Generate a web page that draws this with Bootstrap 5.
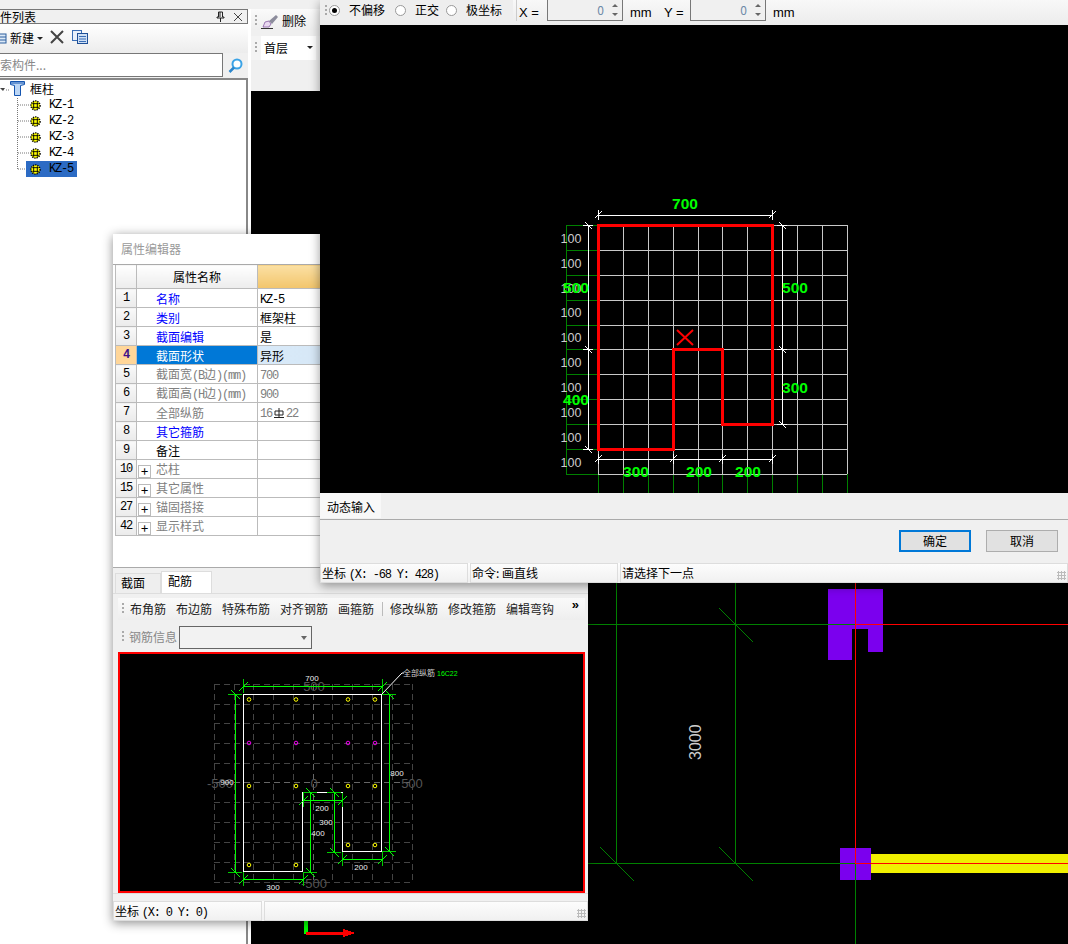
<!DOCTYPE html>
<html lang="zh">
<head>
  <meta charset="UTF-8">
  <title>属性编辑器</title>
  <link rel="stylesheet" href="https://cdn.jsdelivr.net/npm/bootstrap@5.3.3/dist/css/bootstrap.min.css">
  <style>
    html, body { margin: 0; background: #000; }
    body { font: 12px/1.2 "Noto Sans CJK SC", "Liberation Sans", sans-serif; color: #000; }
    svg { display: block; }
    .desk { position: relative; width: 1068px; height: 944px; overflow: hidden; background: #000; }
    .rear { position: absolute; left: 0; top: 0; }
    .win { position: absolute; background: #f0f0f0; }
    .lat { font-family: "Liberation Mono", monospace; letter-spacing: -1.2px; }

    /* left tree pane */
    .pane { left: 0; top: 0; width: 251px; height: 944px; background: #fff; }
    .pane-top { height: 9px; background: #f0f0f0; }
    .pane-title { height: 15px; width: 248px; background: #f0f0f0; border: solid #777; border-width: 1px 1px 1px 0; padding-left: 1px; overflow: hidden; font-size: 12px; line-height: 13px; }
    .pane-tools { height: 29px; width: 248px; background: linear-gradient(#fff, #ececec); }
    .pane-search { height: 25px; width: 248px; background: #f0f0f0; }
    .pane-input { width: 223px; height: 24px; background: #fff; border: 1px solid #777; border-left: 0; color: #888; line-height: 22px; overflow: hidden; }
    .pane-tree { width: 248px; height: 867px; border: solid #888; border-width: 2px 2px 0 0; position: relative; }
    .tree-row { height: 16px; line-height: 16px; }
    .tree-sel { background: #2c6bc4; color: #000; }
    .tool-up { margin-top: -4px; }

    /* strip */
    .strip { left: 251px; top: 0; width: 69px; height: 91px; }
    .strip-bar { height: 21px; margin-top: 9px; padding-top: 3px; background: linear-gradient(#fafafa, #eee); }
    .grip { width: 2px; height: 12px; flex: none; background: repeating-linear-gradient(#aaa 0 2px, transparent 2px 4px); }
    .level { height: 24px; margin-top: 6px; background: #f4f4f4; }
    .level-box { width: 55px; height: 24px; background: #fff; line-height: 24px; padding-left: 3px; }

    /* property window */
    .prop { left: 113px; top: 234px; width: 475px; height: 687px; box-shadow: 0 2px 10px rgba(0,0,0,.45); }
    .prop-title { height: 30px; background: #fff; color: #9a9a9a; line-height: 30px; padding-left: 8px; }
    .prop-body { height: 304px; background: #fff; border: solid #aaa; border-width: 1px 0; padding-left: 2px; overflow: hidden; }
    .prop-grid { table-layout: fixed; width: 460px; border-collapse: collapse; margin: -1px 0 0; }
    .prop-grid th, .prop-grid td { height: 19px; padding: 2px 2px 0; border: 1px solid #bbb; font-weight: 400; line-height: 14px; vertical-align: middle; white-space: nowrap; overflow: hidden; background: #fff; color: #000; box-shadow: none; }
    .prop-grid thead th { height: 24px; padding-top: 0; text-align: center; background: linear-gradient(#fff, #ececec); }
    .prop-grid thead th.hot { background: linear-gradient(#fbe0a4, #f2c56b); }
    .prop-grid th.num { text-align: center; background: linear-gradient(#f9f9f9, #eaeaea); padding: 0; font-family: "Liberation Mono", monospace; letter-spacing: -1.2px; }
    .prop-grid .blue { color: #00f; }
    .prop-grid .mute { color: #808080; }
    .prop-grid td.name { padding-left: 19px; }
    .prop-grid tr.cur th.num { background: #ffd699; color: #40108a; font-weight: 700; }
    .prop-grid tr.cur td.name { background: #0078d7; color: #fff; }
    .prop-grid tr.cur td.val { background: linear-gradient(90deg, #d8e9f8, #d2e4f3); }
    .plus { display: inline-block; width: 13px; height: 13px; border: 1px solid #bbb; margin: 0 5px 0 -18px; text-align: center; line-height: 10px; font-size: 13px; color: #000; vertical-align: -2px; }
    .tab-row { height: 25px; padding: 3px 0 0 2px; }
    .tab-off { width: 46px; height: 21px; margin-top: 2px; background: #eee; border: 1px solid #ddd; border-bottom: 0; line-height: 18px; padding-left: 5px; }
    .tab-on { width: 51px; height: 23px; background: #fff; border: 1px solid #ddd; border-bottom: 0; line-height: 18px; padding-left: 6px; }
    .rebar-body { flex: 1; border: 1px solid #ddd; border-width: 1px 0; padding: 4px 3px 0 5px; min-height: 0; }
    .bar-one { height: 22px; background: linear-gradient(#fafafa, #eee); padding-left: 4px; }
    .bar-item { color: #222; }
    .bar-sep { width: 1px; height: 14px; background: #bbb; }
    .bar-two { height: 29px; margin-top: 3px; }
    .info { color: #888; }
    .combo { width: 133px; height: 23px; margin-left: 2px; border: 1px solid #666; background: #f2f2f2; position: relative; }
    .combo::after { content: ""; position: absolute; right: 4px; top: 9px; border: 3px solid transparent; border-top: 4px solid #666; }
    .shot { width: 467px; height: 243px; border: 2px solid #f00; background: #000; overflow: hidden; }
    .stat { height: 20px; flex: none; background: linear-gradient(#fdfdfd, #f0f0f0); gap: 2px; }
    .stat-cell { border: 1px solid #ddd; line-height: 18px; padding-left: 1px; overflow: hidden; white-space: nowrap; }
    .prop-stat { margin-top: 7px; }

    /* draw dialog */
    .dlg { left: 320px; top: 0; width: 748px; height: 583px; box-shadow: 0 3px 10px rgba(0,0,0,.4); }
    .dlg-tools { height: 25px; flex: none; background: linear-gradient(#f8f8f8, #ececec); }
    .radios { height: 21px; width: 193px; background: #eee; padding-left: 5px; }
    .dot { width: 11px; height: 11px; flex: none; border-radius: 50%; border: 1px solid #999; background: #fff; position: relative; }
    .dot.on::after { content: ""; position: absolute; left: 2px; top: 2px; width: 5px; height: 5px; border-radius: 50%; background: #000; }
    .dlg-sep { width: 1px; height: 21px; margin-left: 3px; background: #ccc; }
    .sans { font-family: "Liberation Sans", sans-serif; font-size: 13px; }
    .spin { width: 76px; height: 22px; margin-top: -1px; align-self: flex-start; border: 1px solid #777; border-top: 0; background: #f0f0f0; color: #6d8aa8; text-align: right; padding-right: 18px; line-height: 21px; position: relative; }
    .spin::before, .spin::after { content: ""; position: absolute; right: 4px; border: 3px solid transparent; }
    .spin::before { top: 2px; border-bottom: 3px solid #666; }
    .spin::after { bottom: 1px; border-top: 3px solid #666; }
    .dlg-tab { height: 27px; flex: none; border-bottom: 1px solid #aaa; }
    .dlg-tab span { display: block; height: 25px; padding-left: 7px; line-height: 28px; background: #f8f8f8; width: 61px; }
    .dlg-btns { height: 43px; flex: none; padding: 10px 10px 0 0; gap: 15px; }
    .dlg-btn { width: 72px; height: 22px; padding: 0; font-size: 12px; line-height: 18px; border-radius: 0; color: #000; background: #e1e1e1; border: 1px solid #adadad; }
    .dlg-btn.hit { border: 2px solid #0078d7; }
    .rgrip { flex: 1; position: relative; }
    .rgrip::after { content: ""; position: absolute; right: 1px; bottom: 2px; width: 9px; height: 9px; background: radial-gradient(#bbb 1px, transparent 1.2px) 0 0 / 3px 3px; }
  </style>
</head>
<body>
<svg width="0" height="0" style="position:absolute">
  <defs>
    <symbol id="gear" viewBox="0 0 12 12">
      <circle cx="6" cy="6" r="5" fill="#ff0" stroke="#000" stroke-width="1.500" stroke-dasharray="1.500 1"/>
      <path d="M4 2.500v7M8 2.500v7M2.500 4h7M2.500 8h7" stroke="#000" stroke-width="1"/>
    </symbol>
  </defs>
</svg>

<div class="desk">
  <svg class="rear" width="1068" height="944" viewBox="0 0 1068 944" shape-rendering="crispEdges">
    <g fill="#7b00ee">
      <path d="M828 589h55v63h-15v-23h-16v31h-24z"/>
      <rect x="840" y="848" width="31" height="32"/>
    </g>
    <rect x="871" y="854" width="197" height="19" fill="#f0f000"/>
    <g stroke="#008000" fill="none">
      <path d="M616.500 583v280M735.500 583v280M588 624.500h267M588 863.500h267M855.500 863v81"/>
    </g>
    <g stroke="#008000" fill="none" shape-rendering="auto">
      <path d="M719 608l34 34M600 847l34 34M719 847l34 34"/>
    </g>
    <path d="M855.500 583v280M855 624.500h213M855 863.500h213" stroke="#f00" fill="none"/>
    <text x="0" y="0" transform="translate(701 760) rotate(-90)" fill="#ccc" font-family="Liberation Sans, sans-serif" font-size="16">3000</text>
    <rect x="304" y="921" width="4" height="13" fill="#0f0"/>
    <path d="M306 932h37v-3l12 4-12 4v-2h-37z" fill="#f00"/>
  </svg>

  <!-- 构件列表 -->
  <aside class="win pane">
    <div class="pane-top"></div>
    <div class="pane-title d-flex align-items-center">
      <span style="margin-left:-13px">构件列表</span>
      <svg class="ms-auto" width="9" height="11" viewBox="0 0 9 11"><path d="M2.500 1h4v5h1.500v1H1V6h1.500zM4.500 7v4M4 1v5" stroke="#222" fill="none"/></svg>
      <svg class="ms-2 me-1" width="10" height="10" viewBox="0 0 10 10"><path d="M1 1l8 8M9 1l-8 8" stroke="#444"/></svg>
    </div>
    <div class="pane-tools d-flex align-items-center">
      <svg width="7" height="11" viewBox="0 0 7 11"><rect x="-4" y="1" width="10" height="9" fill="#dce9f7" stroke="#2d5f9e"/><path d="M-4 4h10M-4 7h10" stroke="#2d5f9e"/></svg>
      <span style="margin-left:3px">新建</span>
      <svg style="margin-left:3px" width="6" height="4" viewBox="0 0 6 4"><path d="M0 0h6L3 3z" fill="#222"/></svg>
      <svg class="tool-up" style="margin-left:7px" width="14" height="14" viewBox="0 0 14 14"><path d="M1 1l12 12M13 1L1 13" stroke="#444" stroke-width="2"/></svg>
      <svg class="tool-up" style="margin-left:8px" width="16" height="14" viewBox="0 0 16 14"><rect x=".5" y=".5" width="9" height="10" fill="#e8f0fb" stroke="#3a6db5"/><rect x="5.500" y="3.500" width="10" height="10" fill="#cfe0f5" stroke="#1f4f96"/><path d="M7 6.500h7M7 9h7M7 11.500h7" stroke="#3a6db5"/></svg>
    </div>
    <div class="pane-search d-flex">
      <div class="pane-input"><span style="margin-left:-12px">搜索构件...</span></div>
      <svg style="margin:5px 0 0 5px" width="15" height="15" viewBox="0 0 15 15"><circle cx="9" cy="6" r="4.500" fill="#fff" stroke="#3aa3e6" stroke-width="2"/><path d="M6 9.500l-4.500 4.500" stroke="#2b86cc" stroke-width="2.500"/></svg>
    </div>
    <div class="pane-tree">
      <svg class="position-absolute" style="left:0;top:0" width="40" height="100"><path d="M17.500 18v71M18 25h11M18 41h11M18 57h11M18 73h11M18 89h8M6 10h3" stroke="#777" stroke-dasharray="1 1" fill="none"/><path d="M0 8l3 3 2-3z" fill="#444"/></svg>
      <div class="d-flex align-items-center position-absolute" style="left:10px;top:1px;height:16px">
        <svg width="15" height="16" viewBox="0 0 15 16"><path d="M.5 .5h14v3l-4 1v10h-6v-10l-4-1z" fill="#bcd6f5" stroke="#1555b0"/><path d="M1 2h13" stroke="#1555b0"/></svg>
        <span style="margin-left:5px;line-height:16px">框柱</span>
      </div>
      <div class="position-absolute" style="left:26px;top:17px;width:51px">
        <div class="tree-row d-flex align-items-center"><svg class="ms-1" width="11" height="11"><use href="#gear"/></svg><span class="lat ms-2">KZ-1</span></div>
        <div class="tree-row d-flex align-items-center"><svg class="ms-1" width="11" height="11"><use href="#gear"/></svg><span class="lat ms-2">KZ-2</span></div>
        <div class="tree-row d-flex align-items-center"><svg class="ms-1" width="11" height="11"><use href="#gear"/></svg><span class="lat ms-2">KZ-3</span></div>
        <div class="tree-row d-flex align-items-center"><svg class="ms-1" width="11" height="11"><use href="#gear"/></svg><span class="lat ms-2">KZ-4</span></div>
        <div class="tree-row tree-sel d-flex align-items-center"><svg class="ms-1" width="11" height="11"><use href="#gear"/></svg><span class="lat ms-2">KZ-5</span></div>
      </div>
    </div>
  </aside>

  <!-- 删除 / 首层 -->
  <div class="win strip">
    <div class="strip-bar d-flex align-items-center">
      <span class="grip ms-1"></span>
      <svg class="ms-1" width="18" height="15" viewBox="0 0 18 15"><path d="M0 14.500h12" stroke="#333"/><path d="M2 13l2-5 4-1 2 3-2 3z" fill="#e9d8f0" stroke="#7a4a9a" stroke-width=".7"/><path d="M8 7l7-6 2 2-6 7z" fill="#8c8c9c"/></svg>
      <span style="margin-left:3px">删除</span>
    </div>
    <div class="level d-flex align-items-center">
      <span class="grip ms-1"></span>
      <div class="level-box ms-1 d-flex">首层<svg class="ms-auto" style="margin-top:10px;margin-right:3px" width="6" height="4" viewBox="0 0 6 4"><path d="M0 0h6L3 3z" fill="#222"/></svg></div>
    </div>
  </div>

  <!-- 属性编辑器 + 配筋 -->
  <section class="win prop d-flex flex-column">
    <div class="prop-title">属性编辑器</div>
    <div class="prop-body">
      <table class="table prop-grid">
        <colgroup><col style="width:21px"><col style="width:121px"><col></colgroup>
        <thead><tr><th></th><th>属性名称</th><th class="hot"></th></tr></thead>
        <tbody>
          <tr><th class="num">1</th><td class="name blue">名称</td><td class="val"><span class="lat">KZ-5</span></td></tr>
          <tr><th class="num">2</th><td class="name blue">类别</td><td class="val">框架柱</td></tr>
          <tr><th class="num">3</th><td class="name blue">截面编辑</td><td class="val">是</td></tr>
          <tr class="cur"><th class="num">4</th><td class="name">截面形状</td><td class="val">异形</td></tr>
          <tr><th class="num">5</th><td class="name mute">截面宽<span class="lat">(B</span>边<span class="lat">)(mm)</span></td><td class="val mute"><span class="lat">700</span></td></tr>
          <tr><th class="num">6</th><td class="name mute">截面高<span class="lat">(H</span>边<span class="lat">)(mm)</span></td><td class="val mute"><span class="lat">900</span></td></tr>
          <tr><th class="num">7</th><td class="name mute">全部纵筋</td><td class="val mute"><span class="lat">16</span><svg class="d-inline-block" style="margin:0 2px;vertical-align:-1px" width="10" height="10" viewBox="0 0 10 10"><path d="M1 7V3h8v4H1M5 0v9M0 9.500h10" stroke="#222" fill="none"/></svg><span class="lat">22</span></td></tr>
          <tr><th class="num">8</th><td class="name blue">其它箍筋</td><td class="val"></td></tr>
          <tr><th class="num">9</th><td class="name">备注</td><td class="val"></td></tr>
          <tr><th class="num">10</th><td class="name mute"><span class="plus">+</span>芯柱</td><td class="val"></td></tr>
          <tr><th class="num">15</th><td class="name mute"><span class="plus">+</span>其它属性</td><td class="val"></td></tr>
          <tr><th class="num">27</th><td class="name mute"><span class="plus">+</span>锚固搭接</td><td class="val"></td></tr>
          <tr><th class="num">42</th><td class="name mute"><span class="plus">+</span>显示样式</td><td class="val"></td></tr>
        </tbody>
      </table>
    </div>
    <div class="tab-row d-flex">
      <div class="tab-off">截面</div>
      <div class="tab-on">配筋</div>
    </div>
    <div class="rebar-body d-flex flex-column">
      <div class="bar-one d-flex align-items-center" style="gap:10px">
        <span class="grip" style="margin-right:-4px"></span>
        <span class="bar-item">布角筋</span>
        <span class="bar-item">布边筋</span>
        <span class="bar-item">特殊布筋</span>
        <span class="bar-item">对齐钢筋</span>
        <span class="bar-item">画箍筋</span>
        <span class="bar-sep" style="margin:0 -3px 0 -2px"></span>
        <span class="bar-item">修改纵筋</span>
        <span class="bar-item">修改箍筋</span>
        <span class="bar-item">编辑弯钩</span>
        <span class="ms-auto sans lh-1" style="margin:-8px 6px 0 0;font-weight:700">»</span>
      </div>
      <div class="bar-two d-flex align-items-center">
        <span class="grip ms-1"></span>
        <span class="info" style="margin-left:5px">钢筋信息</span>
        <div class="combo"></div>
      </div>
      <div class="shot"><svg id="rebar" width="463" height="239" viewBox="120 654 463 239"></svg></div>
    </div>
    <div class="stat prop-stat d-flex">
      <div class="stat-cell" style="width:149px">坐标 <span class="lat">(X: 0 Y: 0)</span></div>
      <div class="stat-cell rgrip"></div>
    </div>
  </section>

  <!-- 画直线对话框 -->
  <section class="win dlg d-flex flex-column">
    <div class="dlg-tools d-flex align-items-center">
      <div class="radios d-flex align-items-center align-self-start">
        <span class="grip"></span>
        <span class="dot on" style="margin-left:2px"></span><span style="margin-left:9px">不偏移</span>
        <span class="dot" style="margin-left:10px"></span><span style="margin-left:9px">正交</span>
        <span class="dot" style="margin-left:7px"></span><span style="margin-left:9px">极坐标</span>
      </div>
      <span class="dlg-sep align-self-start"></span>
      <span class="sans" style="margin-left:2px;width:28px">X =</span>
      <div class="spin">0</div>
      <span class="sans" style="margin-left:7px;width:34px">mm</span>
      <span class="sans" style="width:26px">Y =</span>
      <div class="spin">0</div>
      <span class="sans" style="margin-left:7px">mm</span>
    </div>
    <svg id="section" width="748" height="468" viewBox="320 25 748 468" style="background:#000;flex:none"></svg>
    <div class="dlg-tab"><span>动态输入</span></div>
    <div class="dlg-btns d-flex justify-content-end">
      <button type="button" class="btn dlg-btn hit">确定</button>
      <button type="button" class="btn dlg-btn">取消</button>
    </div>
    <div class="stat d-flex">
      <div class="stat-cell" style="width:148px">坐标 <span class="lat">(X: -68 Y: 428)</span></div>
      <div class="stat-cell" style="width:148px">命令: 画直线</div>
      <div class="stat-cell rgrip">请选择下一点</div>
    </div>
  </section>
</div>

<script>
const NS = 'http://www.w3.org/2000/svg';

function add(svg, tag, attrs, text) {
  const el = document.createElementNS(NS, tag);
  Object.keys(attrs).forEach(k => el.setAttribute(k, attrs[k]));
  if (text) el.textContent = text;
  svg.appendChild(el);
}

function line(svg, x1, y1, x2, y2, color, extra) {
  add(svg, 'line', Object.assign({ x1, y1, x2, y2, stroke: color }, extra || {}));
}

function label(svg, x, y, text, fill, size, extra) {
  add(svg, 'text', Object.assign({
    x, y, fill, 'font-size': size, 'text-anchor': 'middle', 'font-family': 'Liberation Sans, sans-serif'
  }, extra || {}), text);
}

// section canvas of the dialog
const sec = document.getElementById('section');
const vx = [598, 623, 648, 673, 698, 722, 747, 772, 797, 822, 847];
const hy = [225, 250, 275, 300, 325, 349, 374, 399, 424, 449, 474];
const crisp = { 'shape-rendering': 'crispEdges' };

vx.forEach(x => {
  line(sec, x + .5, 225, x + .5, 474, '#c8c8c8', crisp);
  line(sec, x + .5, 474, x + .5, 493, '#008000', crisp);
});
hy.forEach(y => {
  line(sec, 566, y + .5, 598, y + .5, '#008000', crisp);
  line(sec, 598, y + .5, 847, y + .5, '#c8c8c8', crisp);
});
line(sec, 566.5, 225, 566.5, 474, '#008000', crisp);

// white dimension lines
line(sec, 598, 215.5, 772, 215.5, '#fff', crisp);
line(sec, 598, 459.5, 772, 459.5, '#fff', crisp);
line(sec, 588.5, 225, 588.5, 449, '#fff', crisp);
line(sec, 782.5, 225, 782.5, 424, '#fff', crisp);
[[598, 215], [772, 215], [598, 459], [673, 459], [722, 459], [772, 459]].forEach(([x, y]) => {
  line(sec, x + .5, y - 5, x + .5, y + 5, '#fff', crisp);
  line(sec, x - 3, y + 3, x + 4, y - 4, '#fff');
});
[[588, 225], [588, 349], [588, 449], [782, 225], [782, 349], [782, 424]].forEach(([x, y]) => {
  line(sec, x - 5, y + .5, x + 5, y + .5, '#fff', crisp);
  line(sec, x - 3, y - 3, x + 4, y + 4, '#fff');
});

[238, 263, 288, 312, 337, 362, 387, 412, 437, 462].forEach(y => label(sec, 571, y + 5, '100', '#ccc', 12.5));

add(sec, 'path', {
  d: 'M598 225H772V424H722V349H673V449H598Z', fill: 'none', stroke: '#f00', 'stroke-width': 3, 'shape-rendering': 'crispEdges'
});
add(sec, 'path', { d: 'M677 330L693 345M693 330L677 345', stroke: '#f00', 'stroke-width': 2, fill: 'none' });

const dimFont = { 'font-weight': 700 };
[[685, 209, '700'], [576, 293, '500'], [576, 405, '400'], [795, 293, '500'], [795, 393, '300'],
 [636, 477, '300'], [699, 477, '200'], [748, 477, '200']].forEach(([x, y, t]) => label(sec, x, y, t, '#0f0', 15.5, dimFont));

// rebar preview
const reb = document.getElementById('rebar');
const dash = { 'stroke-dasharray': '6 4', 'shape-rendering': 'crispEdges' };
[214, 234, 253, 273, 293, 313, 332, 352, 372, 392, 412].forEach(x => line(reb, x + .5, 684, x + .5, 882, x === 313 ? '#666' : '#444', dash));
[684, 704, 723, 743, 763, 782, 802, 822, 842, 862, 882].forEach(y => line(reb, 214, y + .5, 412, y + .5, y === 782 ? '#666' : '#444', dash));

[['-500', 220, 788], ['0', 314, 788], ['500', 412, 788], ['500', 314, 691], ['-500', 314, 888]].forEach(([t, x, y]) => label(reb, x, y, t, '#555', 13));

add(reb, 'path', {
  d: 'M243.500 694.500H381.500V851.500H342.500V792.500H302.500V871.500H243.500Z', fill: 'none', stroke: '#fff', 'shape-rendering': 'crispEdges'
});

const green = '#0c0';
[[243, 686, 382, 686], [235, 694, 235, 872], [389, 694, 389, 851], [243, 879, 303, 879],
 [342, 859, 382, 859], [303, 800, 342, 800], [310, 792, 310, 872], [334, 792, 334, 852]].forEach(([a, b, c, d]) => {
  line(reb, a + .5, b + .5, c + .5, d + .5, '#0f0', crisp);
  [[a, b], [c, d]].forEach(([x, y]) => {
    if (b === d) {
      line(reb, x + .5, y - 7, x + .5, y + 7, green, crisp);
      line(reb, x - 4, y + 5, x + 5, y - 4, '#0f0');
    } else {
      line(reb, x - 7, y + .5, x + 7, y + .5, green, crisp);
      line(reb, x - 4, y - 4, x + 5, y + 5, '#0f0');
    }
  });
});

[[699.5, '#ff0', [249, 296, 348, 375]], [743, '#e0e', [249, 296, 348, 375]], [786, '#ff0', [249, 296, 348, 375]],
 [845, '#ff0', [348, 375]], [865, '#ff0', [249, 296]]].forEach(([y, color, xs]) => {
  xs.forEach(x => add(reb, 'circle', { cx: x, cy: y, r: 1.8, fill: 'none', stroke: color }));
});

line(reb, 382, 694, 402, 673, '#fff');
line(reb, 402, 673, 404, 673, '#fff');
add(reb, 'text', { x: 403, y: 676, fill: '#ccc', 'font-size': 8 }, '全部纵筋');
add(reb, 'text', { x: 437, y: 676, fill: '#0f0', 'font-size': 7, 'font-family': 'Liberation Sans, sans-serif' }, '16C22');

[[312, 681, '700'], [227, 785, '900'], [397, 776, '800'], [322, 811, '200'], [326, 825, '300'],
 [318, 836, '400'], [273, 890, '300'], [361, 870, '200']].forEach(([x, y, t]) => label(reb, x, y, t, '#eee', 8));
</script>
</body>
</html>
